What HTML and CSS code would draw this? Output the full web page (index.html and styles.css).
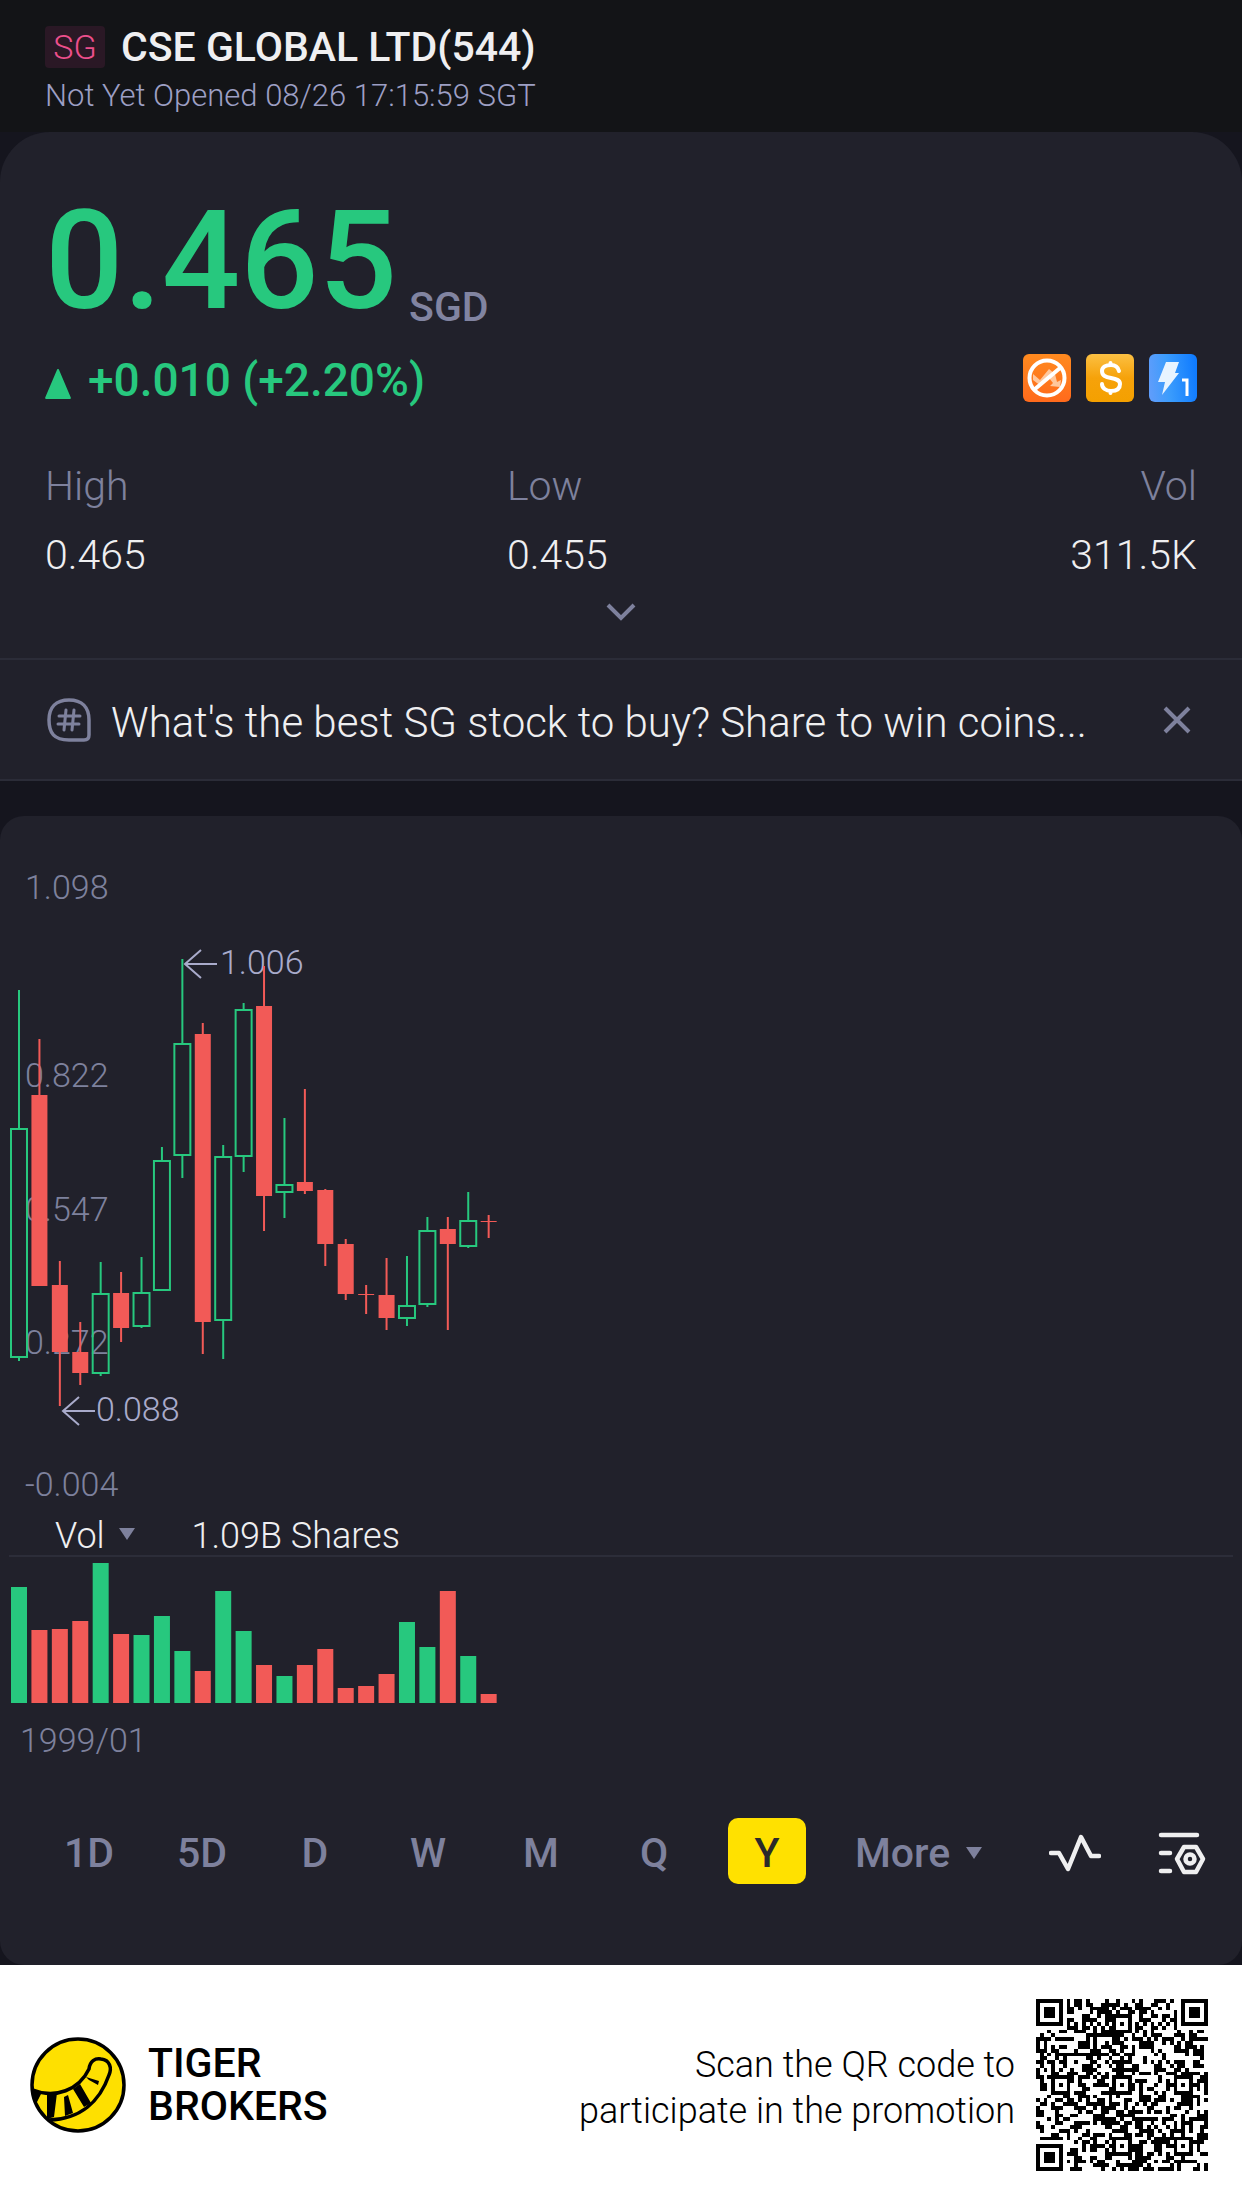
FILE: index.html
```
<!DOCTYPE html>
<html lang="en">
<head>
  <meta charset="UTF-8">
  <title>CSE GLOBAL LTD(544)</title>
  <link rel="stylesheet" href="styles.css">
</head>
<body>

  <!-- Stock name and market status -->
  <header class="header">
    <div class="title-row">
      <span class="market">SG</span>
      <h1>CSE GLOBAL LTD(544)</h1>
    </div>
    <p class="status">Not Yet Opened 08/26 17:15:59 SGT</p>
  </header>

  <main>
    <!-- Price card -->
    <section class="quote">
      <div class="price-row">
        <span class="price">0.465</span>
        <span class="currency">SGD</span>
      </div>

      <div class="change-row">
        <svg class="up" width="26" height="30" viewBox="0 0 24 28"><path d="M12 1 23 27H1Z" fill="#27c87e" stroke="#27c87e" stroke-width="2" stroke-linejoin="round"/></svg>
        <span class="change">+0.010 (+2.20%)</span>
        <div class="tags">
          <svg width="48" height="48" viewBox="0 0 48 48">
            <defs><linearGradient id="orange" x1="0" y1="0" x2="0" y2="1"><stop offset="0" stop-color="#ff8a1f"/><stop offset="1" stop-color="#ff6a1c"/></linearGradient></defs>
            <rect width="48" height="48" rx="6" fill="url(#orange)"/>
            <path d="M10 20l7 6 9-11 6 5 2 8 4-2-1 7-10-1 3-3-4-5-8 8-8-6z" fill="#ffc79c"/>
            <circle cx="24" cy="24" r="17.500" fill="none" stroke="#fff" stroke-width="4"/>
            <path d="M12 35 37 14" stroke="#fff" stroke-width="4"/>
          </svg>
          <svg width="48" height="48" viewBox="0 0 48 48">
            <defs><linearGradient id="gold" x1="0" y1="0" x2="0" y2="1"><stop offset="0" stop-color="#fbc043"/><stop offset=".5" stop-color="#f6a20a"/><stop offset="1" stop-color="#f4a000"/></linearGradient></defs>
            <rect width="48" height="48" rx="6" fill="url(#gold)"/>
            <path d="M33 17c-1-4-4-6-8-6-5 0-9 2-9 6 0 5 4 6 9 7s9 2 9 6c0 5-4 7-9 7s-9-3-9-7M24.500 9v2M24.500 37v2" fill="none" stroke="#fff" stroke-width="4" stroke-linecap="round"/>
          </svg>
          <svg width="48" height="48" viewBox="0 0 48 48">
            <defs><linearGradient id="blue" x1="0" y1=".6" x2="1" y2=".5"><stop offset="0" stop-color="#5f9dfb"/><stop offset=".4" stop-color="#3b9cfc"/><stop offset="1" stop-color="#0f7bff"/></linearGradient></defs>
            <rect width="48" height="48" rx="6" fill="url(#blue)"/>
            <path d="M17 8h13l-4 11h4L13 41l3-13H9z" fill="#e8f4ff"/>
            <path d="M33 26h5v16" fill="none" stroke="#fff" stroke-width="3"/>
          </svg>
        </div>
      </div>

      <dl class="stats">
        <div><dt>High</dt><dd>0.465</dd></div>
        <div><dt>Low</dt><dd>0.455</dd></div>
        <div><dt>Vol</dt><dd>311.5K</dd></div>
      </dl>
      <button class="expand" aria-label="Show more">
        <svg width="32" height="20" viewBox="0 0 32 20"><path d="M3 3l13 13L29 3" fill="none" stroke="#7e819d" stroke-width="4"/></svg>
      </button>
    </section>

    <!-- Topic banner -->
    <section class="topic">
      <svg width="44" height="44" viewBox="0 0 44 44" fill="none" stroke="#7e819d" stroke-linecap="round">
        <path d="M42 22V37q0 5-5 5H22C7 42 2 35 2 22S9 2 22 2 42 9 42 22Z" stroke-width="3.500"/>
        <path d="M12 18H33M11 26H32M19 12l-2 20M27 12l-2 20" stroke-width="3"/>
      </svg>
      <a href="#">What's the best SG stock to buy? Share to win coins...</a>
      <button aria-label="Close">
        <svg width="28" height="28" viewBox="0 0 28 28"><path d="M2 2 26 26M26 2 2 26" stroke="#7e819d" stroke-width="4"/></svg>
      </button>
    </section>

    <!-- Candles and volume -->
    <section class="chart-card">
      <svg id="candles" class="candles"></svg>
      <div class="volume-head">
        <button class="picker">Vol <i class="caret"></i></button>
        <span>1.09B Shares</span>
      </div>
      <svg id="volume" class="volume"></svg>
      <p class="date">1999/01</p>

      <nav class="periods">
        <button>1D</button>
        <button>5D</button>
        <button>D</button>
        <button>W</button>
        <button>M</button>
        <button>Q</button>
        <button class="active">Y</button>
        <button class="more">More <i class="caret"></i></button>
        <button class="tool" aria-label="Indicators">
          <svg width="52" height="42" viewBox="0 0 52 42"><path d="M2 21H10L19 37 32 5 42 24H50" fill="none" stroke="#efeff0" stroke-width="4.500" stroke-linecap="round" stroke-linejoin="round"/></svg>
        </button>
        <button class="tool last" aria-label="Chart settings">
          <svg width="48" height="44" viewBox="0 0 48 44" fill="none" stroke="#efeff0" stroke-width="4.500" stroke-linecap="round" stroke-linejoin="round"><path d="M3 4H39M3 22H12M3 40H12M26 16H38L45 28 38 41H26L19 28Z"/><circle cx="32" cy="28" r="4.500"/></svg>
        </button>
      </nav>
    </section>
  </main>

  <!-- Promotion -->
  <footer class="footer">
    <svg width="96" height="96" viewBox="0 0 96 96">
      <circle cx="48" cy="48" r="46" fill="#fee000"/>
      <g stroke="#000" stroke-width="3.500" fill="none">
        <path d="M3 53C25 62 49 53 59 32 60 24 65 21 71 22 80 23 82 31 79 38 70 64 51 82 19 83"/>
        <circle cx="48" cy="48" r="46"/>
      </g>
      <path d="M2 52 12 55 6 67ZM17 56 27 56 24 80 17 82ZM34 60 38 58 43 76 35 79ZM43 52 50 47 61 66 54 70ZM56 40 69 44 68 48 59 43Z"/>
    </svg>
    <div class="brand">TIGER<br>BROKERS</div>
    <p class="promo">Scan the QR code to<br>participate in the promotion</p>
    <svg id="qr" class="qr" viewBox="0 0 45 45" shape-rendering="crispEdges"></svg>
  </footer>

  <script src="script.js"></script>
</body>
</html>
```
FILE: styles.css
```
* {
  box-sizing: border-box;
}

body {
  margin: 0;
  background: #15151e;
  color: #efeff1;
  font-family: Roboto, "Liberation Sans", sans-serif;
  font-size: 41px;
  font-weight: 300;
}

h1, p, dl, dd {
  margin: 0;
}

svg {
  display: block;
  flex: none;
}

button {
  padding: 0;
  border: 0;
  background: none;
  color: inherit;
  font: inherit;
  cursor: pointer;
}

/* Header */
.header {
  height: 132px;
  padding: 24px 45px 0;
  background: #131417;
}

.title-row {
  display: flex;
  align-items: center;
  gap: 16px;
  height: 46px;
}

.market {
  width: 60px;
  height: 42px;
  border-radius: 4px;
  background: #2a1825;
  color: #ed4f8c;
  font-size: 34px;
  line-height: 42px;
  text-align: center;
}

h1 {
  font-size: 41px;
  font-weight: 500;
}

.status {
  color: #9d9fc4;
  font-size: 31px;
  line-height: 52px;
}

/* Price */
.quote {
  padding: 60px 45px 0;
  border-radius: 50px 50px 0 0;
  background: #21212b;
}

.price-row {
  display: flex;
  align-items: flex-end;
  gap: 12px;
  height: 142px;
}

.price {
  padding-bottom: 4px;
  color: #27c87e;
  font-size: 138px;
  font-weight: 500;
  line-height: 138px;
}

.currency {
  color: #8184a1;
  font-weight: 500;
  line-height: 54px;
}

.change-row {
  display: flex;
  align-items: center;
  height: 88px;
}

.up {
  margin-top: 12px;
}

.change {
  margin-left: 17px;
  padding-top: 4px;
  color: #27c87e;
  font-size: 46px;
  font-weight: 500;
}

.tags {
  display: flex;
  gap: 15px;
  margin-left: auto;
}

.stats {
  display: grid;
  grid-template-columns: 462px 1fr auto;
  margin-top: 30px;
  line-height: 69px;
}

.stats div:last-child {
  text-align: right;
}

dt {
  color: #7e819d;
}

.expand {
  display: block;
  margin: 12px auto 0;
  padding-bottom: 36px;
}

/* Topic */
.topic {
  display: flex;
  align-items: center;
  height: 123px;
  padding: 0 51px 0 47px;
  border-top: 2px solid #2b2c38;
  border-bottom: 2px solid #2b2c38;
  background: #21212b;
}

.topic a {
  flex: 1;
  margin-left: 20px;
  padding-top: 6px;
  color: #efeff1;
  font-size: 42px;
  text-decoration: none;
  white-space: nowrap;
}

/* Chart */
.chart-card {
  margin-top: 35px;
  padding-bottom: 81px;
  border-radius: 24px;
  background: #21212b;
}

.candles {
  width: 100%;
  height: 695px;
  font-size: 34px;
}

.volume-head {
  display: flex;
  align-items: center;
  gap: 56px;
  height: 46px;
  margin: 0 9px;
  padding-top: 5px;
  padding-left: 46px;
  border-bottom: 2px solid #2c2d39;
  font-size: 36px;
}

.caret {
  display: inline-block;
  margin-left: 6px;
  border: 8px solid transparent;
  border-top: 12px solid #7e819d;
  border-bottom: 0;
  vertical-align: 8px;
}

.volume {
  width: 100%;
  height: 146px;
}

.date {
  padding-left: 20px;
  color: #7e819d;
  font-size: 34px;
  line-height: 74px;
}

.periods {
  display: flex;
  align-items: center;
  gap: 35px;
  margin-top: 41px;
  padding: 0 36px 0 50px;
  color: #7e819d;
  font-weight: 500;
}

.periods button {
  width: 78px;
  height: 66px;
  padding-top: 4px;
  border-radius: 10px;
}

.periods .active {
  background: #ffe100;
  color: #2a2a2a;
}

.periods .more {
  width: auto;
  margin-left: 14px;
}

.periods .tool {
  width: auto;
  margin-left: auto;
}

.periods .last {
  margin-left: 22px;
}

/* Footer */
.footer {
  display: flex;
  align-items: center;
  height: 240px;
  padding: 0 34px 0 30px;
  background: #fff;
  color: #000;
}

.brand {
  margin-left: 22px;
  font-size: 41px;
  font-weight: 500;
  line-height: 43px;
}

.promo {
  margin-left: auto;
  padding-top: 5px;
  font-size: 36px;
  line-height: 46px;
  text-align: right;
}

.qr {
  width: 172px;
  height: 172px;
  margin-left: 21px;
}
```
FILE: script.js
```
var GREEN = "#27c87e";
var RED = "#f25a57";
var STEP = 20.42;

// [direction, high, body top, body bottom, low, volume]
var years = [
  ["up", 174, 312, 542, 545, 116],
  ["down", 223, 279, 470, 470, 73],
  ["down", 445, 469, 536, 590, 74],
  ["down", 506, 536, 557, 569, 82],
  ["up", 446, 477, 558, 560, 140],
  ["down", 456, 477, 512, 526, 69],
  ["up", 441, 476, 511, 512, 68],
  ["up", 331, 344, 475, 475, 87],
  ["up", 143, 227, 340, 362, 52],
  ["down", 207, 218, 506, 538, 32],
  ["up", 329, 340, 505, 543, 112],
  ["up", 187, 193, 341, 356, 72],
  ["down", 150, 190, 380, 415, 38],
  ["up", 302, 368, 377, 402, 27],
  ["down", 273, 366, 375, 378, 38],
  ["down", 373, 374, 428, 450, 54],
  ["down", 423, 428, 478, 484, 15],
  ["down", 469, 478, 479, 498, 17],
  ["down", 442, 479, 502, 514, 29],
  ["up", 440, 489, 503, 510, 81],
  ["up", 401, 414, 489, 491, 56],
  ["down", 401, 413, 428, 514, 112],
  ["up", 376, 404, 431, 432, 47],
  ["down", 399, 405, 406, 422, 9]
];

function rect(x, y, w, h, fill) {
  return '<rect x="' + x + '" y="' + y + '" width="' + w + '" height="' + h + '" fill="' + fill + '"/>';
}

function text(x, y, label, fill) {
  return '<text x="' + x + '" y="' + y + '" fill="' + fill + '">' + label + '</text>';
}

function arrow(x, y) {
  return '<path d="M' + (x + 16) + ' ' + (y - 14) + 'L' + x + ' ' + y + 'l16 14M' + x + ' ' + y + 'h32" fill="none" stroke="#a9abcb" stroke-width="2"/>';
}

function drawCharts() {
  var out = text(25, 83, "1.098", "#7e819d") + text(25, 271, "0.822", "#7e819d") +
    text(25, 405, "0.547", "#7e819d") + text(25, 538, "0.272", "#7e819d") +
    text(25, 680, "-0.004", "#7e819d") +
    arrow(185, 148) + text(220, 158, "1.006", "#a9abcb") +
    arrow(63, 595) + text(96, 605, "0.088", "#a9abcb");
  var bars = "";

  years.forEach(function (y, i) {
    var x = 19 + i * STEP;
    if (y[0] === "up") {
      out += rect(x - 1, y[1], 2, y[2] - y[1], GREEN) + rect(x - 1, y[3], 2, y[4] - y[3], GREEN);
      out += '<rect x="' + (x - 8) + '" y="' + (y[2] + 1) + '" width="16" height="' + (y[3] - y[2] - 2) +
        '" fill="none" stroke="' + GREEN + '" stroke-width="2"/>';
    } else {
      out += rect(x - 1, y[1], 2, y[4] - y[1], RED) + rect(x - 8, y[2], 16, y[3] - y[2], RED);
    }
    bars += rect(x - 8, 146 - y[5], 16, y[5], y[0] === "up" ? GREEN : RED);
  });

  document.getElementById("candles").innerHTML = out;
  document.getElementById("volume").innerHTML = bars;
}

// Distance in modules from the centre of a square marker
function ring(x, y, c) {
  return Math.max(Math.abs(x - c[0]), Math.abs(y - c[1]));
}

function drawQr() {
  var seed = 544, out = "";
  for (var y = 0; y < 45; y++) {
    for (var x = 0; x < 45; x++) {
      seed = (seed * 16807) % 2147483647;
      var on = seed / 2147483647 > 0.5;
      if (x === 6 || y === 6) on = (x + y) % 2 === 0;
      [[22, 6], [6, 22], [22, 22], [38, 22], [22, 38], [38, 38]].forEach(function (c) {
        var d = ring(x, y, c);
        if (d <= 2) on = d !== 1;
      });
      [[3, 3], [41, 3], [3, 41]].forEach(function (c) {
        var d = ring(x, y, c);
        if (d <= 4) on = d !== 2 && d !== 4;
      });
      if (on) out += rect(x, y, 1, 1, "#000");
    }
  }
  document.getElementById("qr").innerHTML = out;
}

drawCharts();
drawQr();
```
